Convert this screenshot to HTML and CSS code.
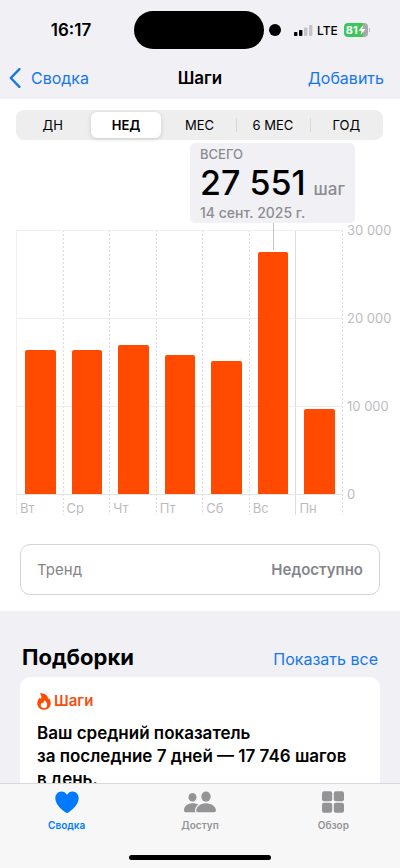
FILE: index.html
```html
<!DOCTYPE html>
<html lang="ru">
<head>
<meta charset="utf-8">
<meta name="viewport" content="width=device-width, initial-scale=1">
<title>Шаги</title>
<link rel="stylesheet" href="styles.css">
</head>
<body>
<div class="app">
  <header class="header">
    <div class="status">
      <div class="status-time">16:17</div>
      <div class="island"></div>
      <div class="status-right">
        <span class="camera-dot"></span>
        <svg class="signal" width="20" height="12" viewBox="0 0 20 12" aria-hidden="true">
          <rect x="1" y="8" width="3.4" height="4" rx="0.8"/>
          <rect x="6" y="6" width="3.4" height="6" rx="0.8"/>
          <rect x="11" y="3.5" width="3.4" height="8.5" rx="0.8" fill="#c4c4c8"/>
          <rect x="16" y="1" width="3.4" height="11" rx="0.8" fill="#c4c4c8"/>
        </svg>
        <span class="network">LTE</span>
        <span class="battery"><span class="battery-body">81<svg width="8" height="10" viewBox="0 0 8 10" aria-hidden="true"><path d="M5.2 0 0.6 5.7h2.9L2.6 10l4.9-5.9H4.4z" fill="#fff"/></svg></span><span class="battery-cap"></span></span>
      </div>
    </div>
    <nav class="nav">
      <a class="nav-link back" href="#summary">
        <svg width="13" height="20" viewBox="0 0 13 20" aria-hidden="true"><path d="M11.4 1.200 2.800 10l8.600 8.800" fill="none" stroke="currentColor" stroke-width="2.4" stroke-linecap="round" stroke-linejoin="round"/></svg>
        <span>Сводка</span>
      </a>
      <h1 class="nav-title">Шаги</h1>
      <a class="nav-link add" href="#add">Добавить</a>
    </nav>
  </header>

  <main class="content">
    <section class="panel">
      <div class="segments">
        <button class="segment" type="button">ДН</button>
        <button class="segment selected" type="button" aria-pressed="true">НЕД</button>
        <button class="segment" type="button">МЕС</button>
        <button class="segment divided" type="button">6 МЕС</button>
        <button class="segment divided" type="button">ГОД</button>
      </div>

      <div class="chart">
        <div class="days">
          <div class="day"><div class="slot"><div class="bar" style="height:54.5%"></div></div><span class="day-name">Вт</span></div>
          <div class="day"><div class="slot"><div class="bar" style="height:54.5%"></div></div><span class="day-name">Ср</span></div>
          <div class="day"><div class="slot"><div class="bar" style="height:56.5%"></div></div><span class="day-name">Чт</span></div>
          <div class="day"><div class="slot"><div class="bar" style="height:52.8%"></div></div><span class="day-name">Пт</span></div>
          <div class="day"><div class="slot"><div class="bar" style="height:50.3%"></div></div><span class="day-name">Сб</span></div>
          <div class="day week-end"><div class="slot"><div class="bar" style="height:91.8%"></div></div><span class="day-name">Вс</span>
            <div class="callout-stem"></div>
          </div>
          <div class="day"><div class="slot"><div class="bar" style="height:32.2%"></div></div><span class="day-name">Пн</span></div>
        </div>
        <div class="axis"><span>30 000</span><span>20 000</span><span>10 000</span><span>0</span></div>
        <div class="callout">
          <div class="callout-label">ВСЕГО</div>
          <div class="callout-value"><strong>27 551</strong><span>шаг</span></div>
          <div class="callout-date">14 сент. 2025 г.</div>
        </div>
      </div>

      <button class="trend" type="button"><span>Тренд</span><strong>Недоступно</strong></button>
    </section>

    <section class="highlights">
      <div class="section-head">
        <h2>Подборки</h2>
        <a href="#all">Показать все</a>
      </div>
      <article class="card">
        <h3 class="card-title">
          <svg width="14" height="17" viewBox="0 0 14 17" aria-hidden="true"><path fill-rule="evenodd" d="M2.6 0.3C8.2 0.2 11.2 2.7 11 6.2c.5-.2.8-.6 1-1.2 1.100 1.500 1.700 3.200 1.700 5C13.700 14 10.900 16.700 7 16.700S.3 14.100.3 10.300C.3 7.900 1.300 6 3 4.700c.4 .8 .7 1.100 1.200 1.300C4.700 3.600 4.300 1.700 2.600.3zM7 7.200c.2 1.500-.4 2.300-1.200 3.200-.3-.2-.5-.4-.7-.8-1 .8-1.400 1.700-1.400 2.700 0 1.700 1.300 2.800 3.200 2.800 2 0 3.300-1.200 3.300-3.100C10.200 9.900 9.200 8 7 7.200z" fill="#ff4a00"/></svg>
          <span>Шаги</span>
        </h3>
        <p>Ваш средний показатель<br>за последние 7 дней — 17 746 шагов<br>в день.</p>
      </article>
    </section>
  </main>

  <footer class="footer">
    <nav class="tabs">
      <a class="tab current" href="#summary">
        <svg width="26" height="24" viewBox="0 0 26 24" aria-hidden="true"><path d="M13 23C11.600 23 1.300 15.900 1.300 8.300 1.300 4.400 4 1.500 7.400 1.500c2.400 0 4.400 1.200 5.600 3.300 1.200-2.100 3.200-3.300 5.600-3.300 3.400 0 6.100 2.900 6.100 6.800C24.700 15.900 14.400 23 13 23z" fill="currentColor"/></svg>
        <span>Сводка</span>
      </a>
      <a class="tab" href="#sharing">
        <svg width="34" height="24" viewBox="0 0 34 24" aria-hidden="true"><g fill="currentColor"><ellipse cx="9.500" cy="7.300" rx="4" ry="4.300"/><ellipse cx="23" cy="6.600" rx="4.700" ry="5.100"/><path d="M13.700 22.200c-1.100-2.400.2-5.500 2.300-7.300-1.700-1.100-4-1.700-6.500-1.700C4.500 13.200 1 16.500 1 19.900c0 1.500.8 2.300 2.200 2.300z"/><path d="M15.300 22.200c-1.500 0-2.200-.7-2.200-1.900 0-3.200 4-7 9.900-7s9.900 3.800 9.900 7c0 1.200-.7 1.900-2.200 1.900z"/></g><path d="M16.600 14.200c-3 2-4.700 4.900-3.700 8.500" fill="none" stroke="#f7f7f8" stroke-width="1.200"/></svg>
        <span>Доступ</span>
      </a>
      <a class="tab" href="#browse">
        <svg width="24" height="24" viewBox="0 0 24 24" aria-hidden="true"><g fill="currentColor"><rect x="1" y="1.300" width="10.200" height="10" rx="2"/><rect x="12.800" y="1.300" width="10.200" height="10" rx="2"/><rect x="1" y="12.700" width="10.200" height="10" rx="2"/><rect x="12.800" y="12.700" width="10.200" height="10" rx="2"/></g></svg>
        <span>Обзор</span>
      </a>
    </nav>
    <div class="home-indicator"></div>
  </footer>
</div>
</body>
</html>
```
FILE: styles.css
```css
* {
  box-sizing: border-box;
}

body {
  margin: 0;
  background: #f0f0f5;
  color: #000;
  font-family: Inter, "Liberation Sans", sans-serif;
}

h1, h2, h3, p {
  margin: 0;
}

a {
  color: #1677e8;
  text-decoration: none;
}

button {
  margin: 0;
  padding: 0;
  border: 0;
  background: none;
  color: inherit;
  font: inherit;
}

svg {
  display: block;
  flex: none;
}

.app {
  display: flex;
  flex-direction: column;
  height: 100vh;
  overflow: hidden;
}

/* Status bar and navigation */
.header {
  flex: none;
  padding-bottom: 8px;
}

.status {
  display: grid;
  grid-template-columns: 1fr 130px 1fr;
  align-items: center;
  height: 60px;
  padding-right: 2px;
}

.status-time {
  padding-left: 8px;
  font-size: 17px;
  font-weight: 600;
  text-align: center;
}

.island {
  height: 38px;
  border-radius: 19px;
  background: #000;
}

.status-right {
  display: flex;
  align-items: center;
  padding-left: 5px;
}

.camera-dot {
  width: 12px;
  height: 12px;
  margin-right: 12px;
  border-radius: 50%;
  background: #000;
}

.network {
  margin-left: 4px;
  font-size: 12px;
  font-weight: 500;
}

.battery {
  display: flex;
  align-items: center;
  gap: 1px;
  margin-left: 6px;
}

.battery-body {
  display: flex;
  align-items: center;
  justify-content: center;
  width: 24px;
  height: 14px;
  border-radius: 4px;
  background: linear-gradient(90deg, #3cc65c 81%, #a8a8ac 81%);
  color: #fff;
  font-size: 11px;
  font-weight: 700;
}

.battery-cap {
  width: 1px;
  height: 4px;
  background: #b8b8bc;
}

.nav {
  display: grid;
  grid-template-columns: 1fr auto 1fr;
  align-items: center;
  height: 31px;
  padding: 4px 16px 0 8px;
}

.nav-link {
  font-size: 16px;
}

.back {
  display: flex;
  align-items: center;
  gap: 10px;
}

.add {
  text-align: right;
}

.nav-title {
  padding-left: 8px;
  font-size: 17px;
  font-weight: 600;
}

/* Chart panel */
.content {
  flex: 1;
  min-height: 0;
  overflow: hidden;
}

.panel {
  padding: 11px 17px 16px 16px;
  background: #fff;
}

.segments {
  display: grid;
  grid-template-columns: repeat(5, 1fr);
  height: 30px;
  padding: 2px 0;
  border-radius: 8px;
  background: #eeeeef;
}

.segment {
  position: relative;
  border-radius: 6px;
  font-size: 13px;
  font-weight: 400;
}

.selected {
  margin: 0 2px;
  background: #fff;
  box-shadow: 0 1px 4px rgba(0, 0, 0, 0.16);
  font-weight: 600;
}

.divided::before {
  position: absolute;
  top: 6px;
  bottom: 6px;
  left: 0;
  width: 1px;
  background: #d8d8da;
  content: "";
}

.chart {
  position: relative;
  display: grid;
  grid-template-columns: 1fr 40px;
  margin-top: 90px;
}

.days {
  display: grid;
  grid-template-columns: repeat(7, 1fr);
  border-left: 1px solid #f0f0f2;
}

.day {
  position: relative;
  background: repeating-linear-gradient(#dcdce0 0 2px, transparent 2px 4px) right / 1px 100% no-repeat;
}

.week-end {
  background: linear-gradient(#dcdce0, #dcdce0) right / 1px 100% no-repeat;
}

.slot {
  display: flex;
  align-items: flex-end;
  height: 265px;
  padding: 0 8px;
  border-bottom: 1px solid #e4e4e7;
  background: repeating-linear-gradient(#ededf0 0 1px, transparent 1px 88px);
}

.bar {
  width: 100%;
  border-radius: 2px 2px 0 0;
  background: #ff4a00;
}

.day-name {
  display: block;
  height: 20px;
  padding-left: 3px;
  color: #bcbcc0;
  font-size: 13px;
  line-height: 26px;
}

.axis {
  display: flex;
  flex-direction: column;
  justify-content: space-between;
  height: 280px;
  margin-top: -8px;
  padding-left: 4px;
  color: #bcbcc0;
  font-size: 13px;
  line-height: 16px;
  white-space: nowrap;
}

.callout {
  position: absolute;
  bottom: calc(100% + 7px);
  left: 174px;
  padding: 2px 10px 1px;
  border-radius: 5px;
  background: #f0f0f5;
  color: #8c8c91;
  font-weight: 500;
  white-space: nowrap;
}

.callout-stem {
  position: absolute;
  top: -7px;
  left: 50%;
  width: 1px;
  height: 27px;
  background: #c4c4c8;
}

.callout-label {
  font-size: 13px;
  line-height: 18px;
}

.callout-value {
  display: flex;
  align-items: baseline;
  gap: 8px;
  height: 40px;
  font-size: 17px;
  line-height: 40px;
}

.callout-value strong {
  color: #000;
  font-size: 34px;
  font-weight: 500;
}

.callout-date {
  font-size: 14px;
  line-height: 19px;
}

.trend {
  display: flex;
  align-items: center;
  justify-content: space-between;
  width: calc(100% - 7px);
  height: 51px;
  margin: 29px 3px 0 4px;
  padding: 0 16px;
  border: 1px solid #d4d4d6;
  border-radius: 10px;
  color: #85858a;
  font-size: 15px;
}

.trend strong {
  font-weight: 600;
}

/* Highlights */
.highlights {
  padding: 32px 20px 0;
}

.section-head {
  display: flex;
  align-items: baseline;
  justify-content: space-between;
  padding: 0 2px 6px;
}

.section-head h2 {
  font-size: 22px;
  font-weight: 700;
  line-height: 28px;
}

.section-head a {
  font-size: 16px;
}

.card {
  padding: 14px 17px;
  border-radius: 10px;
  background: #fff;
}

.card-title {
  display: flex;
  align-items: center;
  gap: 3px;
  color: #f5500f;
  font-size: 15px;
  font-weight: 600;
  line-height: 20px;
}

.card p {
  margin-top: 11px;
  font-size: 17px;
  font-weight: 600;
  line-height: 23px;
}

/* Tab bar */
.footer {
  flex: none;
  height: 85px;
  border-top: 1px solid #d8d8da;
  background: #f7f7f8;
}

.tabs {
  display: grid;
  grid-template-columns: repeat(3, 1fr);
  padding-top: 6px;
}

.tab {
  display: flex;
  flex-direction: column;
  align-items: center;
  gap: 4px;
  color: #949497;
  font-size: 10px;
  font-weight: 600;
  line-height: 14px;
}

.current {
  color: #007aff;
}

.home-indicator {
  width: 142px;
  height: 5px;
  margin: 23px auto 0;
  border-radius: 3px;
  background: #000;
}
```
